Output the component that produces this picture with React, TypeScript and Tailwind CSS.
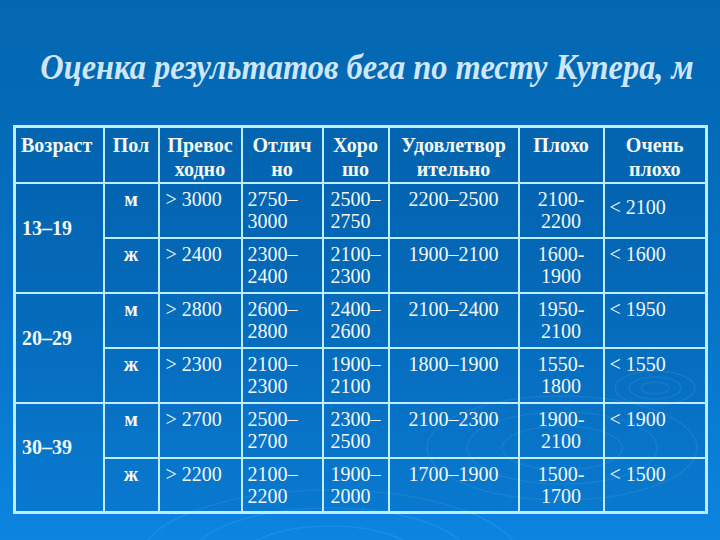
import React from 'react';

type Row = { sex: string; cells: string[][]; lastMiddle?: boolean };
type Group = { age: string; rows: Row[] };

const HEAD: { label: string[]; align: string }[] = [
  { label: ['Возраст'], align: 'text-left' },
  { label: ['Пол'], align: 'text-center' },
  { label: ['Превос', 'ходно'], align: 'text-center' },
  { label: ['Отлич', 'но'], align: 'text-center' },
  { label: ['Хоро', 'шо'], align: 'text-center' },
  { label: ['Удовлетвор', 'ительно'], align: 'text-center' },
  { label: ['Плохо'], align: 'text-center' },
  { label: ['Очень', 'плохо'], align: 'text-center' },
];

const WIDTHS = ['w-[89px]', 'w-[55px]', 'w-[83px]', 'w-[81px]', 'w-[66px]', 'w-[130px]', 'w-[85px]', 'w-[103px]'];

const GROUPS: Group[] = [
  {
    age: '13–19',
    rows: [
      { sex: 'м', cells: [['> 3000'], ['2750–', '3000'], ['2500–', '2750'], ['2200–2500'], ['2100-', '2200'], ['< 2100']], lastMiddle: true },
      { sex: 'ж', cells: [['> 2400'], ['2300–', '2400'], ['2100–', '2300'], ['1900–2100'], ['1600-', '1900'], ['< 1600']] },
    ],
  },
  {
    age: '20–29',
    rows: [
      { sex: 'м', cells: [['> 2800'], ['2600–', '2800'], ['2400–', '2600'], ['2100–2400'], ['1950-', '2100'], ['< 1950']] },
      { sex: 'ж', cells: [['> 2300'], ['2100–', '2300'], ['1900–', '2100'], ['1800–1900'], ['1550-', '1800'], ['< 1550']] },
    ],
  },
  {
    age: '30–39',
    rows: [
      { sex: 'м', cells: [['> 2700'], ['2500–', '2700'], ['2300–', '2500'], ['2100–2300'], ['1900-', '2100'], ['< 1900']] },
      { sex: 'ж', cells: [['> 2200'], ['2100–', '2200'], ['1900–', '2000'], ['1700–1900'], ['1500-', '1700'], ['< 1500']] },
    ],
  },
];

// alignment of the six value columns
const VALUE_ALIGN = ['text-left pl-[6px]', 'text-left pl-[5px]', 'text-left pl-[7px]', 'text-center', 'text-center', 'text-left pl-[5px]'];

const cell = 'border-2 border-[#bdeeff] align-top';

function Ripples() {
  return (
    <svg className="absolute inset-0 pointer-events-none" width="720" height="540" viewBox="0 0 720 540">
      <g fill="none" stroke="#8fd0ff" strokeOpacity="0.12" strokeWidth="1.5">
        <ellipse cx="655" cy="388" rx="14" ry="6" />
        <ellipse cx="655" cy="388" rx="26" ry="11" />
        <ellipse cx="655" cy="388" rx="40" ry="17" />
        <ellipse cx="562" cy="448" rx="60" ry="22" />
        <ellipse cx="562" cy="448" rx="95" ry="36" />
        <ellipse cx="562" cy="448" rx="135" ry="52" />
        <ellipse cx="330" cy="560" rx="90" ry="34" />
        <ellipse cx="330" cy="560" rx="140" ry="52" />
        <ellipse cx="330" cy="560" rx="190" ry="70" />
      </g>
    </svg>
  );
}

export default function App() {
  return (
    <div
      className="relative w-[720px] h-[540px] overflow-hidden bg-gradient-to-b from-[#0366b0] via-[#0570c2] to-[#0c85e0] text-[#f3f8f4]"
      style={{ fontFamily: '"Liberation Serif", "Times New Roman", serif' }}
    >
      <Ripples />
      <div className="relative pt-[47px] h-[125px] flex justify-center">
        <h1 className="ml-[14px] whitespace-nowrap scale-x-[0.9] text-[36px] leading-[40px] font-bold italic text-[#cde6f8]">
          Оценка результатов бега по тесту Купера, м
        </h1>
      </div>
      <div className="relative ml-[13px]">
        <table className="table-fixed border-collapse w-[694px] bg-[#00285a]/10 border-[3px] border-[#bdeeff]">
          <colgroup>
            {WIDTHS.map((w, i) => (
              <col key={i} className={w} />
            ))}
          </colgroup>
          <thead>
            <tr className="h-[56px]">
              {HEAD.map((h, i) => (
                <th
                  key={i}
                  className={`${cell} ${h.align} ${i === 0 ? 'pl-[5px]' : ''} pt-[5px] text-[20px] leading-[24px] font-bold`}
                >
                  {h.label.map((l) => (
                    <div key={l}>{l}</div>
                  ))}
                </th>
              ))}
            </tr>
          </thead>
          <tbody>
            {GROUPS.map((g) =>
              g.rows.map((r, ri) => (
                <tr key={g.age + ri} className="h-[55px]">
                  {ri === 0 && (
                    <td rowSpan={2} className={`${cell} !align-middle pl-[6px] pb-[20px] text-[20px] font-bold`}>
                      {g.age}
                    </td>
                  )}
                  <td className={`${cell} text-center pt-[4px] text-[20px] leading-[22px] font-bold`}>{r.sex}</td>
                  {r.cells.map((c, ci) => (
                    <td
                      key={ci}
                      className={`${cell} ${VALUE_ALIGN[ci]} ${
                        ci === 5 && r.lastMiddle ? '!align-middle pb-[6px]' : 'pt-[4px]'
                      } text-[20px] leading-[22px]`}
                    >
                      {c.map((l) => (
                        <div key={l}>{l}</div>
                      ))}
                    </td>
                  ))}
                </tr>
              ))
            )}
          </tbody>
        </table>
      </div>
    </div>
  );
}
